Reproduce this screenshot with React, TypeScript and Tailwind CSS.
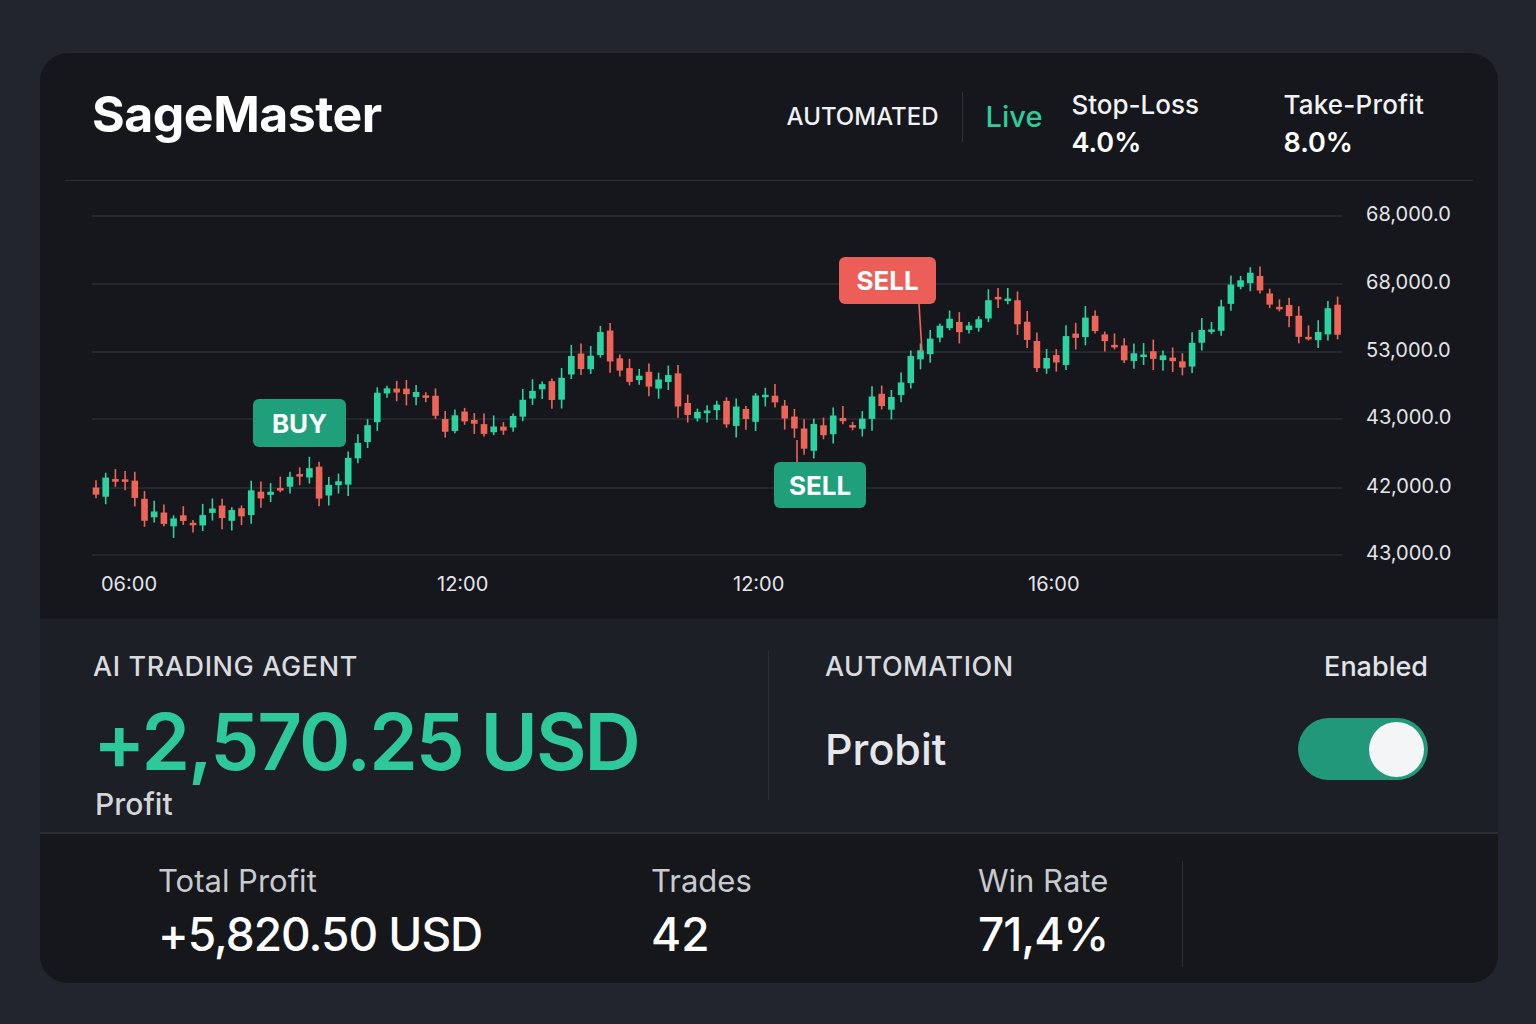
import React from "react";

type Candle = { x: number; open: number; close: number; high: number; low: number };

// rough price path in page pixels (x, y) traced from the chart
const path: [number, number][] = [
  [96, 490], [130, 488], [150, 520], [165, 526], [200, 526], [240, 506], [280, 492], [300, 470],
  [320, 486], [340, 492], [358, 455], [370, 420], [385, 400], [400, 402], [420, 405], [460, 422],
  [480, 422], [510, 426], [530, 405], [560, 385], [580, 362], [600, 342], [612, 350], [622, 370],
  [640, 375], [670, 382], [682, 405], [700, 416], [740, 412], [770, 402], [785, 415], [797, 438],
  [812, 437], [830, 426], [850, 416], [870, 406], [890, 393], [905, 376], [915, 345], [925, 340],
  [940, 340], [960, 330], [980, 312], [1000, 305], [1012, 306], [1022, 325], [1040, 354], [1055, 368],
  [1075, 335], [1090, 325], [1105, 326], [1115, 350], [1130, 355], [1150, 368], [1165, 368],
  [1185, 356], [1200, 346], [1215, 320], [1230, 294], [1240, 278], [1250, 285], [1260, 272],
  [1275, 292], [1290, 316], [1300, 322], [1312, 325], [1322, 320], [1340, 323],
];

function pathAt(x: number) {
  for (let i = 0; i < path.length - 1; i++) {
    const [x0, y0] = path[i];
    const [x1, y1] = path[i + 1];
    if (x >= x0 && x <= x1) return y0 + ((y1 - y0) * (x - x0)) / (x1 - x0);
  }
  return path[path.length - 1][1];
}

function rng(seed: number) {
  return () => {
    seed |= 0;
    seed = (seed + 0x6d2b79f5) | 0;
    let t = Math.imul(seed ^ (seed >>> 15), 1 | seed);
    t = (t + Math.imul(t ^ (t >>> 7), 61 | t)) ^ t;
    return ((t ^ (t >>> 14)) >>> 0) / 4294967296;
  };
}

function buildCandles(): Candle[] {
  const r = rng(17);
  const out: Candle[] = [];
  let prev = pathAt(96);
  for (let i = 0; i < 129; i++) {
    const x = 96 + i * 9.7;
    const close = pathAt(x + 5) + (r() - 0.5) * 28;
    const open = prev + (r() - 0.5) * 8;
    const top = Math.min(open, close) - 2 - r() * 10;
    const bottom = Math.max(open, close) + 2 + r() * 10;
    out.push({ x, open, close, high: top, low: bottom });
    prev = close;
  }
  return out;
}

const candles = buildCandles();
const grid = [35, 103, 171, 238, 307, 374];
const yLabels = ["68,000.0", "68,000.0", "53,000.0", "43,000.0", "42,000.0", "43,000.0"];
const xLabels: [number, string][] = [[61, "06:00"], [397, "12:00"], [693, "12:00"], [988, "16:00"]];

function Chart() {
  return (
    <div className="relative h-[438px] shrink-0">
      <svg width="1458" height="438" viewBox="0 0 1458 438" className="block">
        {grid.map((y) => (
          <line key={y} x1="52" x2="1302" y1={y} y2={y} stroke="#2b2e34" strokeWidth="1.5" />
        ))}
        {grid.map((y, i) => (
          <text key={i} x="1326" y={y} dominantBaseline="middle" fill="#e4e5e8" fontSize="20" fontFamily="Inter, sans-serif">
            {yLabels[i]}
          </text>
        ))}
        {xLabels.map(([x, t], i) => (
          <text key={i} x={x} y="405" dominantBaseline="middle" fill="#e4e5e8" fontSize="20" fontFamily="Inter, sans-serif">
            {t}
          </text>
        ))}
        <g transform="translate(-40,-181)">
          {candles.map((c, i) => {
            const up = c.close <= c.open;
            const color = up ? "#2bd3a0" : "#ee6457";
            const top = Math.min(c.open, c.close);
            const h = Math.max(2.5, Math.abs(c.open - c.close));
            return (
              <g key={i}>
                <line x1={c.x} x2={c.x} y1={c.high} y2={c.low} stroke={color} strokeWidth="1.6" />
                <rect x={c.x - 3.3} y={top} width="6.6" height={h} fill={color} />
              </g>
            );
          })}
          <line x1="797" x2="797" y1="462" y2="440" stroke="#ee6457" strokeWidth="1.6" />
          <line x1="919" x2="922" y1="304" y2="352" stroke="#ee6457" strokeWidth="1.6" />
        </g>
      </svg>
      <div className="absolute left-[213px] top-[218px] flex h-[48px] w-[93px] items-center justify-center rounded-[6px] bg-[#20a07a] text-[26px] font-bold text-white">
        BUY
      </div>
      <div className="absolute left-[734px] top-[281px] flex h-[46px] w-[92px] items-center justify-center rounded-[6px] bg-[#20a07a] text-[26px] font-bold text-white">
        SELL
      </div>
      <div className="absolute left-[799px] top-[76px] flex h-[47px] w-[97px] items-center justify-center rounded-[6px] bg-[#ec5f59] text-[26px] font-bold text-white">
        SELL
      </div>
    </div>
  );
}

export default function App() {
  return (
    <div className="min-h-screen bg-[#22252d] px-[40px] pt-[53px] pb-[41px]" style={{ fontFamily: "Inter, 'Noto Sans', sans-serif" }}>
      <div className="flex h-[930px] w-[1458px] flex-col overflow-hidden rounded-[28px] bg-[#15171c]">
        <header className="mx-[25px] flex h-[128px] shrink-0 items-center justify-between border-b-[1.5px] border-[#2b2e34] pl-[27px] pr-[49px]">
          <h1 className="mt-[-4px] text-[50px] font-bold tracking-[-0.5px] text-white">SageMaster</h1>
          <div className="flex items-center">
            <span className="ml-[4px] text-[24px] font-medium text-[#f1f2f4]">AUTOMATED</span>
            <span className="mx-[23px] h-[50px] w-px bg-[#2e3137]" />
            <span className="text-[29px] font-medium text-[#2ecb9b]">Live</span>
            <div className="ml-[29px] mt-[16px] w-[212px] leading-tight">
              <div className="text-[26px] font-medium text-[#f1f2f4]">Stop-Loss</div>
              <div className="mt-[4px] text-[27px] font-semibold text-white">4.0%</div>
            </div>
            <div className="mt-[16px] leading-tight">
              <div className="text-[26px] font-medium tracking-[0.2px] text-[#f1f2f4]">Take-Profit</div>
              <div className="mt-[4px] text-[27px] font-semibold text-white">8.0%</div>
            </div>
          </div>
        </header>

        <Chart />

        <section className="flex h-[215px] shrink-0 border-b-2 border-[#2a2d33] bg-[#1c1f25]">
          <div className="w-[728px] pl-[53px] pt-[28px]">
            <div className="text-[27px] font-medium leading-[40px] tracking-[0.6px] text-[#d9dbdf]">AI TRADING AGENT</div>
            <div className="mt-[16px] text-[78px] font-semibold leading-none tracking-[-2px] text-[#2ec99a]">+2,570.25 USD</div>
            <div className="ml-[2px] mt-[1px] text-[30px] font-medium leading-[45px] text-[#d3d5d9]">Profit</div>
          </div>
          <div className="my-[32px] w-px bg-[#2b2e34]" />
          <div className="flex flex-1 flex-col pl-[56px] pr-[70px] pt-[28px]">
            <div className="flex items-center justify-between leading-[40px]">
              <span className="text-[27px] font-medium tracking-[0.5px] text-[#d9dbdf]">AUTOMATION</span>
              <span className="text-[27px] font-medium text-[#e3e4e7]">Enabled</span>
            </div>
            <div className="mt-[30px] flex items-center justify-between">
              <span className="text-[43px] font-medium text-[#e6e7ea]">Probit</span>
              <div className="flex h-[62px] w-[130px] items-center justify-end rounded-full bg-[#22987a] pr-[4px]">
                <div className="h-[55px] w-[55px] rounded-full bg-[#f4f5f6]" />
              </div>
            </div>
          </div>
        </section>

        <section className="flex flex-1 items-stretch bg-[#15171b] pb-[16px] pl-[118px] pt-[27px]">
          <div className="w-[493px]">
            <div className="text-[31px] leading-[40px] text-[#c8cacf]">Total Profit</div>
            <div className="mt-[5px] text-[46px] font-medium leading-[56px] tracking-[-1px] text-white">+5,820.50 USD</div>
          </div>
          <div className="w-[327px]">
            <div className="text-[31px] leading-[40px] text-[#c8cacf]">Trades</div>
            <div className="mt-[5px] text-[46px] font-medium leading-[56px] text-white">42</div>
          </div>
          <div className="w-[205px] border-r border-[#2b2e34]">
            <div className="text-[31px] leading-[40px] text-[#c8cacf]">Win Rate</div>
            <div className="mt-[5px] text-[46px] font-medium leading-[56px] tracking-[-1px] text-white">71,4%</div>
          </div>
        </section>
      </div>
    </div>
  );
}
